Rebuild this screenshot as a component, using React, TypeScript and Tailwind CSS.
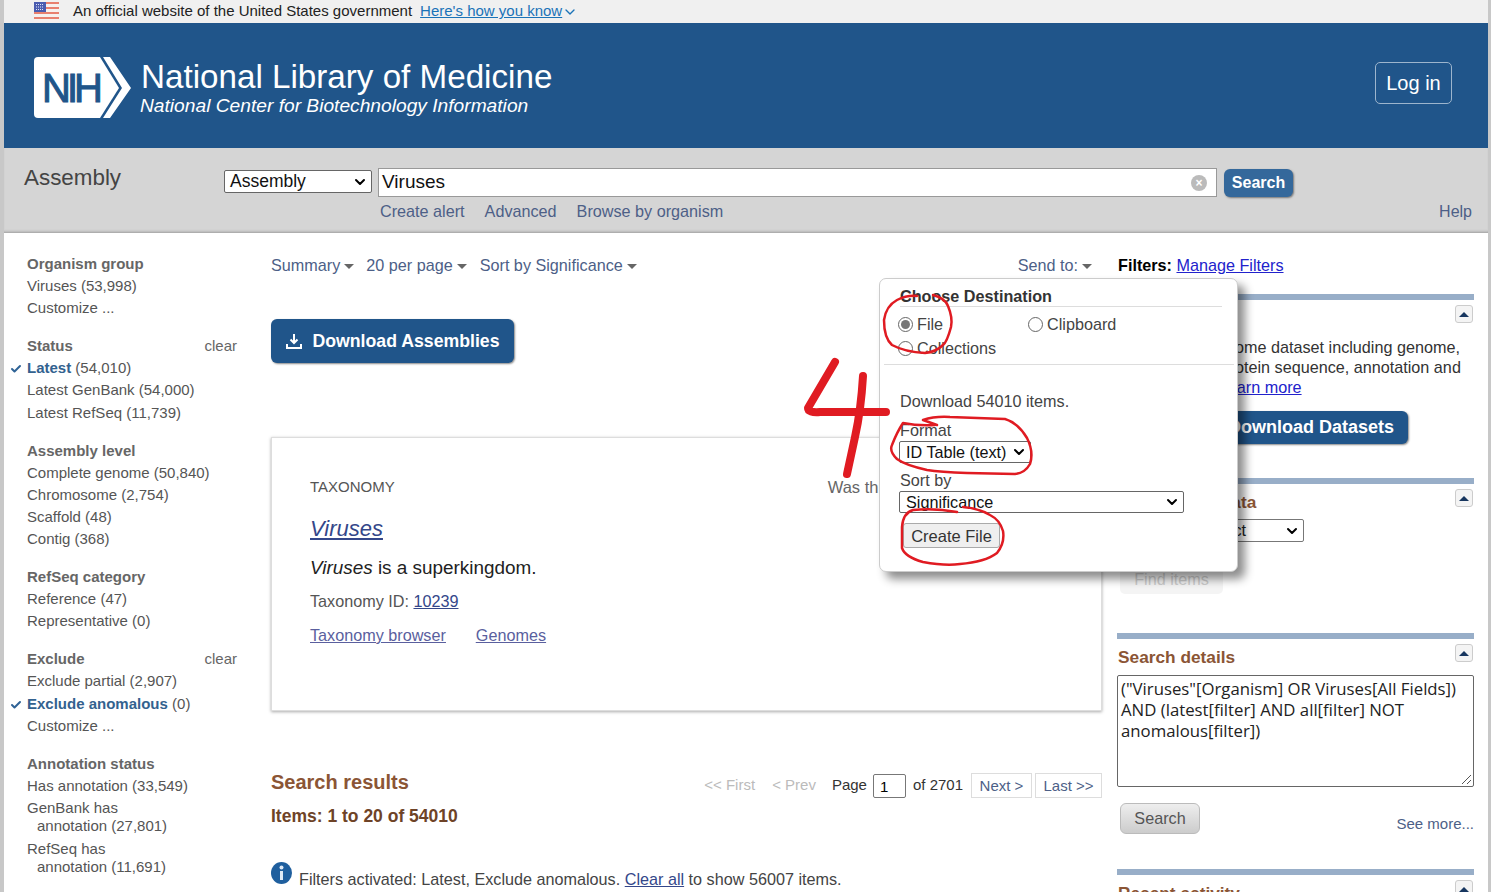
import { Check, ChevronDown } from 'lucide-react'

type Row = { label: string; count?: string; on?: boolean; tall?: boolean }
type Group = { title: string; clear?: boolean; rows: Row[] }

const groups: Group[] = [
  { title: 'Organism group', rows: [{ label: 'Viruses', count: '(53,998)' }, { label: 'Customize ...' }] },
  {
    title: 'Status',
    clear: true,
    rows: [
      { label: 'Latest', count: '(54,010)', on: true },
      { label: 'Latest GenBank', count: '(54,000)', tall: true },
      { label: 'Latest RefSeq', count: '(11,739)' },
    ],
  },
  {
    title: 'Assembly level',
    rows: [
      { label: 'Complete genome', count: '(50,840)' },
      { label: 'Chromosome', count: '(2,754)' },
      { label: 'Scaffold', count: '(48)' },
      { label: 'Contig', count: '(368)' },
    ],
  },
  {
    title: 'RefSeq category',
    rows: [
      { label: 'Reference', count: '(47)' },
      { label: 'Representative', count: '(0)' },
    ],
  },
  {
    title: 'Exclude',
    clear: true,
    rows: [
      { label: 'Exclude partial', count: '(2,907)', tall: true },
      { label: 'Exclude anomalous', count: '(0)', on: true },
      { label: 'Customize ...' },
    ],
  },
]

const FacetRow = ({ row }: { row: Row }) => (
  <div className={`relative leading-[22px] text-[#555] ${row.tall ? 'h-[23px]' : 'h-[22px]'}`}>
    {row.on && <Check size={12} strokeWidth={4} className="absolute left-[-17px] top-[6px] text-[#2f6396]" />}
    <span className={row.on ? 'font-bold text-[#33628f]' : ''}>{row.label}</span>
    {row.count && <span> {row.count}</span>}
  </div>
)

const Facets = () => (
  <aside className="w-[267px] shrink-0 pl-[23px] pt-[20px] text-[15px]">
    {groups.map(g => (
      <div key={g.title} className="mb-[16px] w-[210px]">
        <div className="flex h-[22px] justify-between leading-[22px] font-bold text-[#666]">
          {g.title}
          {g.clear && <span className="font-normal text-[#666]">clear</span>}
        </div>
        {g.rows.map(r => (
          <FacetRow key={r.label} row={r} />
        ))}
      </div>
    ))}
    <div className="w-[210px] text-[#555]">
      <div className="h-[22px] leading-[22px] font-bold text-[#666]">Annotation status</div>
      <div className="h-[22px] leading-[22px]">Has annotation (33,549)</div>
      <div className="h-[18px] leading-[22px]">GenBank has</div>
      <div className="h-[23px] pl-[10px] leading-[22px]">annotation (27,801)</div>
      <div className="h-[18px] leading-[22px]">RefSeq has</div>
      <div className="h-[22px] pl-[10px] leading-[22px]">annotation (11,691)</div>
    </div>
  </aside>
)

const Caret = () => <span className="ml-[4px] inline-block border-x-[5px] border-t-[5px] border-x-transparent border-t-[#666] align-middle" />

const DownloadIcon = () => (
  <svg width="18" height="18" viewBox="0 0 18 18" fill="none" stroke="white" strokeWidth="2">
    <path d="M9 2v9M5.500 7.500 9 11l3.500-3.500" />
    <path d="M2 12v4h14v-4" />
  </svg>
)

const Center = () => (
  <main className="w-[831px] shrink-0 pt-[21px] text-[16.2px]">
    <div className="flex h-[22px] items-center leading-[22px] text-[#4d5f87]">
      <span>Summary<Caret /></span>
      <span className="ml-[12px]">20 per page<Caret /></span>
      <span className="ml-[13px]">Sort by Significance<Caret /></span>
      <span className="ml-auto mr-[10px]">Send to:<Caret /></span>
    </div>
    <button className="mt-[43px] flex h-[44px] w-[243px] items-center justify-center gap-[9px] rounded-[6px] bg-[#20558a] text-[17.700px] font-bold text-white shadow-[1px_1px_2px_#888]">
      <DownloadIcon />
      Download Assemblies
    </button>
    <section className="mt-[74px] h-[274px] border border-[#ddd] pl-[38px] pt-[39px] shadow-[0_1px_3px_#aaa]">
      <div className="flex h-[20px] items-center text-[15px] text-[#555]">
        TAXONOMY
        <span className="ml-[433px] text-[16.500px] text-[#666]">Was this helpful?</span>
      </div>
      <a className="mt-[18px] block text-[22px] leading-[28px] italic text-[#34478a] underline">Viruses</a>
      <p className="mt-[13px] text-[18.900px] leading-[24px] text-[#222]"><i>Viruses</i> is a superkingdom.</p>
      <p className="mt-[10px] leading-[22px] text-[#555]">
        Taxonomy ID: <a className="text-[#34478a] underline">10239</a>
      </p>
      <div className="mt-[12px] flex gap-[30px] leading-[22px] text-[#5a5f9e] underline">
        <a>Taxonomy browser</a>
        <a>Genomes</a>
      </div>
    </section>
    <div className="mt-[58px] flex h-[26px] items-center">
      <h2 className="text-[20px] font-bold text-[#8b5535]">Search results</h2>
      <div className="ml-auto mt-[7px] flex items-center text-[15px]">
        <span className="text-[#bbb]">&lt;&lt; First</span>
        <span className="ml-[17px] text-[#bbb]">&lt; Prev</span>
        <span className="ml-[16px] text-[#333]">Page</span>
        <span className="ml-[6px] h-[24px] w-[33px] rounded-[2px] border border-[#777] pl-[6px] leading-[23px] text-black">1</span>
        <span className="ml-[7px] text-[#333]">of 2701</span>
        <span className="ml-[8px] h-[25px] w-[61px] border border-[#ddd] text-center leading-[23px] text-[#4d5f87]">Next &gt;</span>
        <span className="ml-[3px] h-[25px] w-[67px] border border-[#ddd] text-center leading-[23px] text-[#4d5f87]">Last &gt;&gt;</span>
      </div>
    </div>
    <p className="mt-[11px] h-[20px] text-[17.500px] leading-[20px] font-bold text-[#6e4327]">Items: 1 to 20 of 54010</p>
    <div className="mt-[37px] flex h-[26px] items-end">
      <svg width="21" height="22" viewBox="0 0 21 22" className="mb-[5px]">
        <ellipse cx="10.500" cy="11" rx="10.500" ry="11" fill="#1f5f9e" />
        <circle cx="10.500" cy="5.500" r="2" fill="#dfeaf5" />
        <rect x="9" y="9" width="3" height="9" fill="#dfeaf5" />
      </svg>
      <p className="ml-[7px] leading-[20px] text-[#444]">
        Filters activated: Latest, Exclude anomalous. <a className="text-[#34478a] underline">Clear all</a> to show 56007 items.
      </p>
    </div>
  </main>
)

const Toggle = () => (
  <span className="mr-[1px] flex h-[18px] w-[18px] shrink-0 items-center justify-center rounded-[3px] border border-[#ccc] bg-[#f4f4f4]">
    <span className="border-x-[5px] border-b-[5px] border-x-transparent border-b-[#17365f]" />
  </span>
)

const Bar = () => <div className="h-[6px] bg-[#98aec8]" />

const Right = () => (
  <aside className="ml-[15px] w-[357px] shrink-0 pt-[21px] text-[16.2px]">
    <div className="h-[22px] pl-[1px] leading-[22px] text-black">
      <b>Filters: </b>
      <a className="text-[#2222cc] underline">Manage Filters</a>
    </div>
    <div className="mt-[18px]"><Bar /></div>
    <div className="mt-[5px] flex justify-end"><Toggle /></div>
    <p className="mt-[14px] pl-[1px] leading-[20px] text-[#333]">
      Download a genome dataset including genome, transcript and protein sequence, annotation and a data report. <a className="text-[#2222cc] underline">Learn more</a>
    </p>
    <button className="mt-[14px] flex h-[33px] w-[291px] items-center justify-end rounded-[6px] bg-[#20558a] pr-[14px] text-[18px] font-bold text-white shadow-[1px_1px_2px_#888]">
      Download Datasets
    </button>
    <div className="mt-[34px]"><Bar /></div>
    <div className="mt-[5px] flex justify-between pl-[1px]">
      <h3 className="mt-[1px] text-[17.300px] leading-[25px] font-bold text-[#8b5535]">Find related data</h3>
      <Toggle />
    </div>
    <div className="mt-[4px] flex h-[23px] w-[187px] items-center justify-end rounded-[2px] border border-[#777] pr-[3px] text-[#222]">
      <span className="mr-[38px]">Select</span>
      <ChevronDown size={16} strokeWidth={3} className="text-black" />
    </div>
    <div className="mt-[26px] ml-[3px] flex h-[26px] w-[103px] items-center justify-center rounded-[5px] bg-[#f4f4f4] pb-[4px] text-[#ccc]">Find items</div>
    <div className="mt-[39px]"><Bar /></div>
    <div className="mt-[5px] flex justify-between pl-[1px]">
      <h3 className="mt-[1px] text-[17.300px] leading-[25px] font-bold text-[#8b5535]">Search details</h3>
      <Toggle />
    </div>
    <div className="relative mt-[5px] h-[112px] rounded-[2px] border border-[#666] pl-[3px] pt-[2px] font-['Open_Sans',sans-serif] text-[16.750px] leading-[21px] text-[#222]">
      ("Viruses"[Organism] OR Viruses[All Fields]) AND (latest[filter] AND all[filter] NOT anomalous[filter])
      <svg width="11" height="11" viewBox="0 0 11 11" className="absolute right-[1px] bottom-[1px]" stroke="#555" strokeWidth="1">
        <path d="M1 10 10 1M6 10l4-4" />
      </svg>
    </div>
    <div className="mt-[16px] flex items-end justify-between">
      <button className="ml-[3px] h-[31px] w-[80px] rounded-[6px] border border-[#bbb] bg-gradient-to-b from-[#eee] to-[#ccc] text-[#555]">Search</button>
      <span className="text-[15px] leading-[20px] text-[#4d5f87]">See more...</span>
    </div>
    <div className="mt-[35px]"><Bar /></div>
    <div className="mt-[5px] flex justify-between pl-[1px]">
      <h3 className="mt-[1px] text-[17.300px] leading-[25px] font-bold text-[#8b5535]">Recent activity</h3>
      <Toggle />
    </div>
  </aside>
)

const Radio = ({ on }: { on?: boolean }) => (
  <span className="flex h-[15px] w-[15px] shrink-0 items-center justify-center rounded-full border border-[#666] bg-white">
    {on && <span className="h-[9px] w-[9px] rounded-full bg-[#777]" />}
  </span>
)

const Select = ({ label, w }: { label: string; w: string }) => (
  <div className={`ml-[-1px] flex h-[22px] items-center justify-between rounded-[2px] border border-[#666] pl-[6px] pr-[3px] text-[#111] ${w}`}>
    {label}
    <ChevronDown size={16} strokeWidth={3} className="text-black" />
  </div>
)

const SendTo = () => (
  <div className="absolute left-[879px] top-[278px] h-[294px] w-[359px] rounded-[7px] border border-[#ccc] bg-white pl-[4px] pr-[3px] pt-[7px] text-[16.200px] text-[#444] shadow-[7px_7px_10px_rgba(0,0,0,0.45)]">
    <div className="ml-[16px] mr-[12px] h-[21px] border-b border-[#ddd] leading-[20px] font-bold text-[#333]">Choose Destination</div>
    <div className="ml-[14px] mt-[5px] flex h-[24px] items-center">
      <Radio on />
      <span className="ml-[4px] w-[111px]">File</span>
      <Radio />
      <span className="ml-[4px]">Clipboard</span>
    </div>
    <div className="ml-[14px] flex h-[24px] items-center">
      <Radio />
      <span className="ml-[4px]">Collections</span>
    </div>
    <div className="mt-[4px] border-t border-[#ddd] pl-[16px] pt-[25px]">
      <p className="leading-[22px]">Download 54010 items.</p>
      <p className="mt-[7px] leading-[22px]">Format</p>
      <Select label="ID Table (text)" w="w-[132px]" />
      <p className="mt-[6px] leading-[22px]">Sort by</p>
      <Select label="Significance" w="w-[285px]" />
      <button className="ml-[3px] mt-[10px] h-[25px] w-[97px] rounded-[3px] border border-[#aaa] bg-[#efefef] text-[16.500px] leading-[22px] text-[#333]">Create File</button>
    </div>
  </div>
)

// red pen marks drawn over the screenshot
const PenMarks = () => (
  <svg className="pointer-events-none absolute left-0 top-0" width="1491" height="892" fill="none" stroke="#e01b22" strokeLinecap="round" strokeLinejoin="round">
    <g strokeWidth="8">
      <path d="M835 362 808 408Q808 413 820 412L886 412" />
      <path d="M863 376Q861 410 855 437L847 474" />
    </g>
    <g strokeWidth="2.500">
      <path d="M933 295Q945 298 948 306Q953 318 951 327Q947 342 943 345Q936 352 925 353Q905 352 892 345Q884 338 884 320Q886 306 897 300Q907 295 917 296" />
      <path d="M937 425 923 420Q935 416 950 417L1005 419Q1018 423 1027 438Q1034 452 1030 464Q1025 473 1015 474L967 473Q940 472 927 470Q905 465 897 459Q889 451 892 445Q897 432 903 423Q918 426 935 425" />
      <path d="M957 512Q935 508 913 510Q903 513 902 527L902 548Q905 557 923 562Q945 566 960 564Q985 562 997 553Q1005 543 1003 531Q1000 520 990 515Q978 508 963 507" />
    </g>
  </svg>
)

const App = () => (
  <div className="relative h-[892px] w-[1491px] overflow-hidden bg-[#c8c8c8] pl-[4px] pr-[3px] font-['Liberation_Sans',Arial,sans-serif]">
    <div className="flex h-[23px] items-center bg-[#f0f0f0] pl-[30px] text-[15px] text-[#222]">
      <svg width="25" height="20" viewBox="0 0 25 20">
        <rect width="25" height="20" fill="#f6f0ee" />
        <path d="M0 1h25M0 6h25M0 11h25M0 16h25" stroke="#e8806f" strokeWidth="2" />
        <rect width="12" height="10" fill="#4a5cb0" />
        <path d="M2 2.500h8M2 5h8M2 7.500h8" stroke="#dfe3f5" strokeWidth="1" strokeDasharray="1 1" />
      </svg>
      <span className="ml-[14px]">An official website of the United States government</span>
      <a className="ml-[8px] text-[#1a73b8] underline">Here's how you know</a>
      <ChevronDown size={16} className="text-[#1a73b8]" />
    </div>
    <header className="flex h-[125px] items-center bg-[#20558a] pl-[30px] pr-[36px]">
      <svg width="97" height="62" viewBox="0 0 97 62" className="mt-[4px]">
        <path d="M4 0H66L85 31 66 61H4Q0 61 0 57V4Q0 0 4 0Z" fill="white" />
        <path d="M69 0H76L97 31 76 61H69L88 31Z" fill="white" />
        <text x="8" y="45" fontFamily="Liberation Sans" fontSize="40" fill="#20558a" stroke="#20558a" strokeWidth="1" textLength="61">NIH</text>
      </svg>
      <div className="ml-[10px] mt-[4px] text-white">
        <div className="text-[33.200px] leading-[36px]">National Library of Medicine</div>
        <div className="ml-[-1px] mt-[-1px] text-[19.200px] leading-[23px] italic">National Center for Biotechnology Information</div>
      </div>
      <button className="mb-[6px] ml-auto h-[42px] w-[77px] rounded-[5px] border border-[#9db5cd] text-[20px] text-white">Log in</button>
    </header>
    <div className="flex h-[85px] bg-[#d5d5d5] shadow-[inset_0_-3px_3px_-2px_#999]">
      <div className="w-[220px] pl-[20px] pt-[16px] text-[22.400px] leading-[28px] text-[#444]">Assembly</div>
      <div className="w-[1069px] shrink-0 pt-[20px]">
        <div className="flex items-start">
          <div className="mt-[2px] flex h-[23px] w-[148px] items-center justify-between rounded-[2px] border border-[#666] bg-white pl-[5px] pr-[3px] text-[17.500px] text-[#111]">
            Assembly
            <ChevronDown size={16} strokeWidth={3} className="text-black" />
          </div>
          <div className="ml-[6px] flex h-[29px] w-[839px] items-center justify-between border border-[#999] bg-white pl-[3px] pr-[9px] text-[19px] text-[#111]">
            Viruses
            <span className="flex h-[16px] w-[16px] items-center justify-center rounded-full bg-[#bbb] text-[12px] leading-none font-bold text-white">×</span>
          </div>
          <button className="ml-[7px] mt-[1px] h-[28px] w-[69px] rounded-[6px] bg-[#34689b] text-[16px] font-bold text-white shadow-[1px_1px_2px_#777]">Search</button>
        </div>
        <div className="ml-[156px] mt-[3px] flex gap-[20px] text-[16.200px] leading-[22px] text-[#4d5f87]">
          <span>Create alert</span>
          <span>Advanced</span>
          <span>Browse by organism</span>
        </div>
      </div>
      <div className="flex-1 pr-[16px] pt-[53px] text-right text-[16px] leading-[22px] text-[#4d5f87]">Help</div>
    </div>
    <div className="flex h-[659px] overflow-hidden bg-white">
      <Facets />
      <Center />
      <Right />
    </div>
    <SendTo />
    <PenMarks />
  </div>
)

export default App
